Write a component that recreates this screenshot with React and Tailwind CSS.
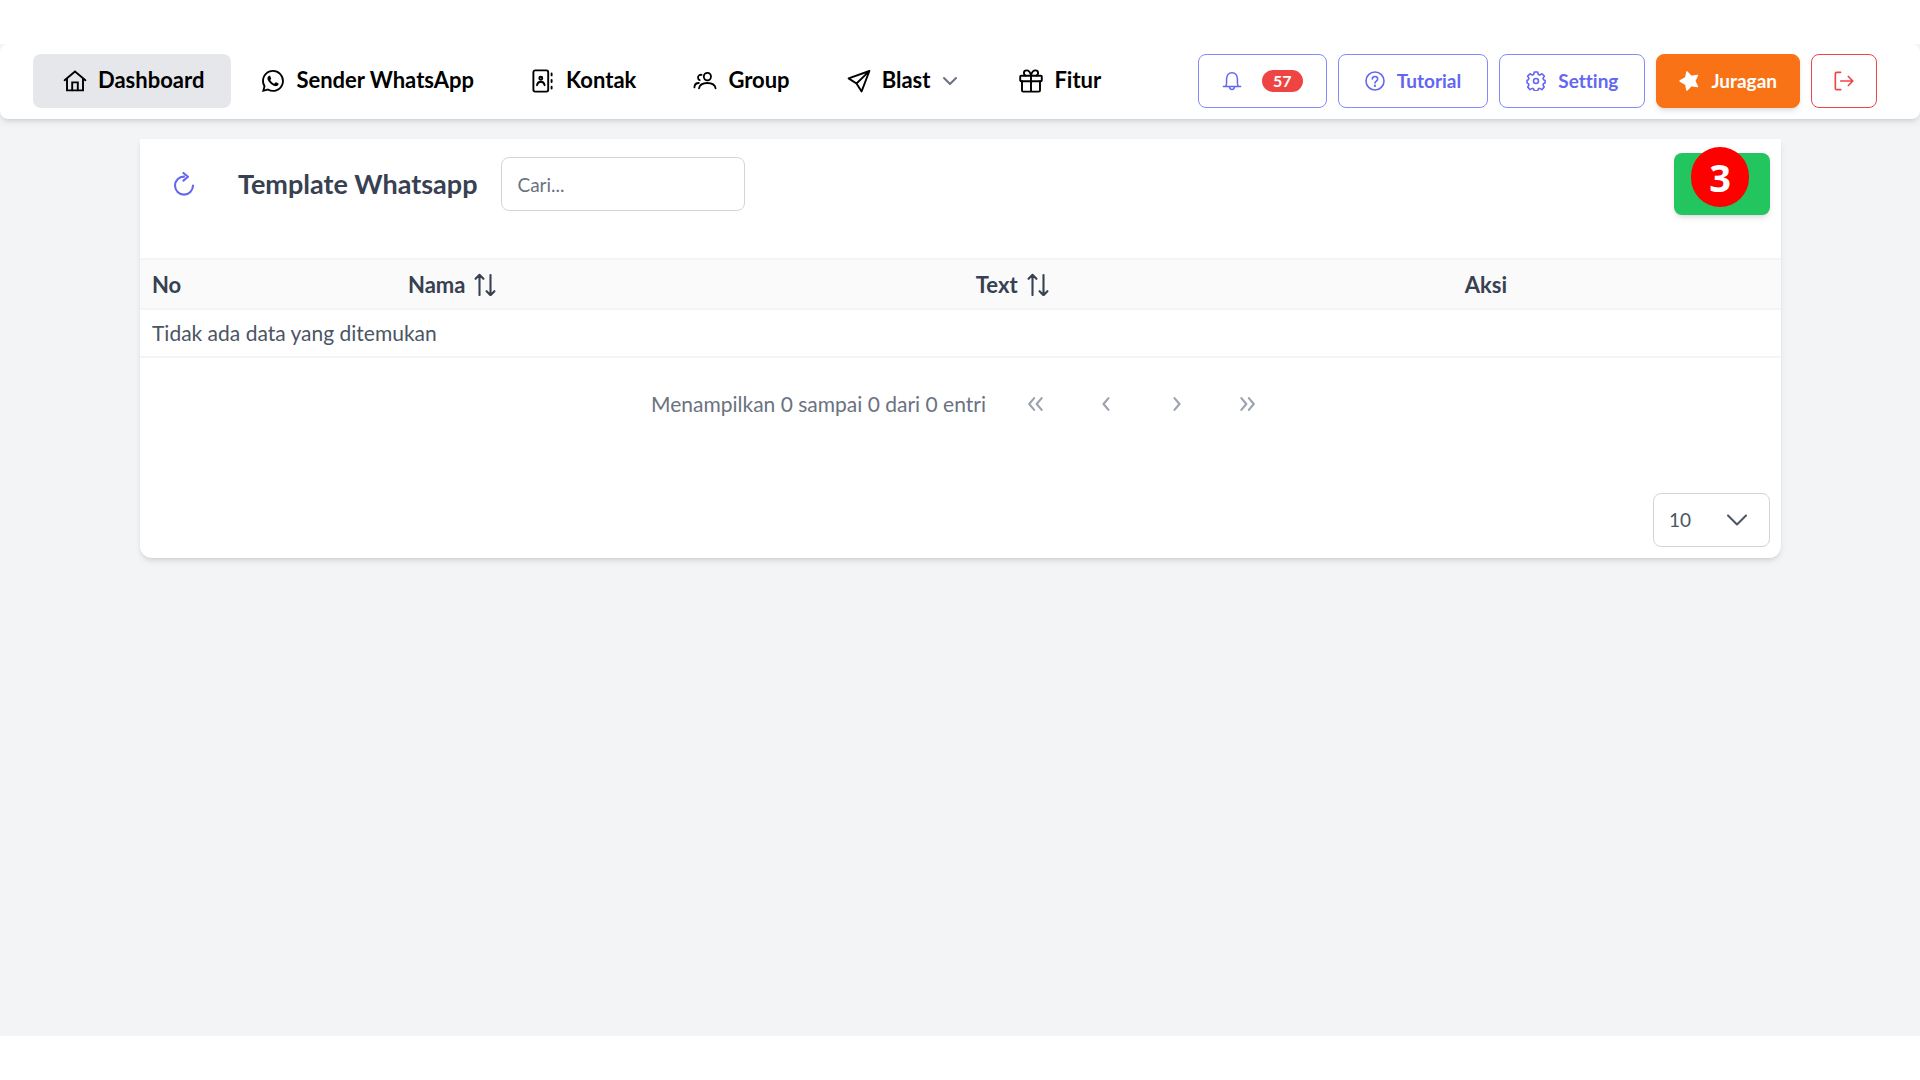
import { BsWhatsapp } from "react-icons/bs";

function Icon({ size = "size-6", stroke = 1.8, children }) {
  return (
    <svg
      viewBox="0 0 24 24"
      className={`${size} shrink-0`}
      fill="none"
      stroke="currentColor"
      strokeWidth={stroke}
      strokeLinecap="round"
      strokeLinejoin="round"
      aria-hidden="true"
    >
      {children}
    </svg>
  );
}

const HomeIcon = () => (
  <Icon stroke={1.9}>
    <path d="M1.6 11.2 12 2.6l10.4 8.6M4 9.6V21.4h16V9.6" strokeLinejoin="miter" />
    <path d="M9.2 21.2v-7.8h5.6v7.8" strokeLinejoin="miter" />
  </Icon>
);

const ContactIcon = () => (
  <Icon stroke={1.9}>
    <rect x="2.4" y="1.4" width="14.8" height="21.2" rx="1.8" />
    <circle cx="9.8" cy="9.2" r="1.5" />
    <path d="M6 16.2c.4-2.5 1.8-3.5 3.8-3.5s3.4 1 3.8 3.5M20.6 4.4v2M20.6 11v2M20.6 17.6v2" />
  </Icon>
);

const GroupIcon = () => (
  <Icon stroke={1.8}>
    <ellipse cx="14.4" cy="7.6" rx="3.6" ry="3.8" />
    <path d="M6 19.4c.6-3.8 3.7-5.4 8.4-5.4s7.6 1.6 8.2 5.4" />
    <path d="M8.6 5.8C6.6 5.6 5 6.6 5 8.6c0 1.2.6 2.1 1.7 2.5M1.4 18.4c.1-2.8 1.6-4.4 4.4-4.4" />
  </Icon>
);

const SendIcon = () => (
  <Icon stroke={1.9}>
    <path d="M22.4 2 1.6 9.4l7.9 5.1 5.1 7.9L22.4 2ZM22 2.4 9.5 14.5" />
  </Icon>
);

const GiftIcon = () => (
  <Icon stroke={1.9}>
    <rect x="1.2" y="6.8" width="21.6" height="5.4" rx="1" />
    <path d="M3 12.2v9.2c0 .7.5 1.2 1.2 1.2h15.6c.7 0 1.2-.5 1.2-1.2v-9.2M12 6.8v15.8" />
    <path d="M12 6.6C11.2 3 9.6 1.4 7.6 1.4c-1.6 0-2.7 1-2.7 2.5 0 1.2.7 2.2 1.6 2.7M12 6.6c.8-3.6 2.4-5.2 4.4-5.2 1.6 0 2.7 1 2.7 2.5 0 1.2-.7 2.2-1.6 2.7" />
  </Icon>
);

const ChevronDown = ({ size, stroke }) => (
  <Icon size={size} stroke={stroke}>
    <path d="m3 7.5 9 9 9-9" />
  </Icon>
);

const BellIcon = () => (
  <Icon size="size-5" stroke={1.8}>
    <path d="M1.6 18.6h20.8M4.4 18.4c1-1.2 1.1-3 1.1-5V9.6C5.5 5.2 8 2 12 2s6.5 3.2 6.5 7.6v3.8c0 2 .1 3.8 1.1 5M8.8 18.8c.3 2.2 1.5 3.4 3.2 3.4s2.9-1.2 3.2-3.4" />
  </Icon>
);

const HelpIcon = () => (
  <Icon size="size-5" stroke={1.9}>
    <circle cx="12" cy="12" r="10.8" />
    <path d="M8.8 9.6C8.9 7.7 10.2 6.6 12 6.6s3.2 1.1 3.2 2.9c0 2.7-3.2 2.6-3.2 5" />
    <circle cx="12" cy="17.6" r=".5" fill="currentColor" />
  </Icon>
);

const GearIcon = () => (
  <Icon size="size-5" stroke={1.9}>
    <path d="M9.9 1.2h4.2l.7 3 1.6.7 2.7-1.6 2.9 2.9-1.6 2.7.7 1.6 1.8.8v3l-1.8.8-.7 1.6 1.4 2.7-2.8 2.9-2.7-1.5-1.6.7-.7 2.3H9.9l-.7-2.3-1.6-.7-2.7 1.5-2.8-2.9 1.4-2.7-.7-1.6-1.6-.8v-3l1.6-.8.7-1.6L2 6.2l2.9-2.9 2.7 1.6 1.6-.7.7-3Z" />
    <circle cx="12" cy="12" r="3" />
  </Icon>
);

const StarIcon = () => (
  <Icon size="size-5" stroke={2}>
    <path
      fill="currentColor"
      d="M1.4 12l6.8-3.8 1.4-6.8 5 5.2 7.4-1.2-3.2 6.600 3.200 6.600-7.400-1.200-5 5.200-1.400-6.800Z"
    />
  </Icon>
);

const LogoutIcon = () => (
  <Icon size="size-5" stroke={2}>
    <path d="M8 1.6H3.4C2.3 1.6 1.6 2.3 1.6 3.4v17.2c0 1.1.7 1.8 1.8 1.8H8M8 12h14.5M17.2 6.6l5.4 5.4-5.4 5.4" />
  </Icon>
);

const RefreshIcon = () => (
  <Icon stroke={2.1}>
    <path d="M12 4.6a9 9 0 1 0 9 9M11.4 1l4.6 3.8-4.6 3.8" />
  </Icon>
);

const SortIcon = () => (
  <Icon stroke={2.1}>
    <path d="M6.5 23V3M2.6 6.8 6.5 2.8l3.9 4M17.5 3v20M13.6 19.2l3.9 4 3.9-4" />
  </Icon>
);

const navItems = [
  { label: "Dashboard", icon: <HomeIcon />, active: true },
  { label: "Sender WhatsApp", icon: <BsWhatsapp className="size-[22px]" aria-hidden="true" /> },
  { label: "Kontak", icon: <ContactIcon /> },
  { label: "Group", icon: <GroupIcon /> },
  { label: "Blast", icon: <SendIcon />, submenu: true },
  { label: "Fitur", icon: <GiftIcon /> },
];

const pagerButtons = [
  { label: "Halaman pertama", d: "m11 5-6 7 6 7M20 5l-6 7 6 7" },
  { label: "Halaman sebelumnya", d: "m15 5-6 7 6 7" },
  { label: "Halaman berikutnya", d: "m9 5 6 7-6 7" },
  { label: "Halaman terakhir", d: "m4 5 6 7-6 7M13 5l6 7-6 7" },
];

function ActionButton({ tone, label, children }) {
  return (
    <button
      type="button"
      aria-label={label}
      className={`flex h-[54px] items-center gap-3 rounded-lg border text-[19px] font-bold ${tone}`}
    >
      {children}
    </button>
  );
}

function Navbar() {
  return (
    <header className="relative flex items-center justify-between rounded-lg bg-white pt-[10px] pr-[43px] pb-[11px] pl-[33px] shadow-md">
      <nav>
        <ul className="flex">
          {navItems.map((item) => (
            <li key={item.label}>
              <a
                href="#"
                className={`flex h-[54px] items-center gap-2 rounded-lg px-[27px] text-[22px] font-bold text-black ${
                  item.active ? "bg-[#e5e7eb]" : ""
                }`}
              >
                <span className="flex w-[30px] justify-center">{item.icon}</span>
                <span className="pb-[3px]">{item.label}</span>
                {item.submenu && (
                  <span className="flex w-6 justify-center text-[#6b7280]">
                    <ChevronDown size="size-4" stroke={3} />
                  </span>
                )}
              </a>
            </li>
          ))}
        </ul>
      </nav>
      <div className="flex gap-[11px]">
        <ActionButton tone="px-[23px] border-[#818cf8] text-[#6366f1]" label="Notifikasi">
          <BellIcon />
          <span className="ml-2 flex h-[22px] w-[41px] items-center justify-center rounded-full bg-[#ef4444] text-base text-white">
            57
          </span>
        </ActionButton>
        <ActionButton tone="px-[26px] border-[#818cf8] text-[#6366f1]">
          <HelpIcon />
          <span>Tutorial</span>
        </ActionButton>
        <ActionButton tone="px-[26px] border-[#818cf8] text-[#6366f1]">
          <GearIcon />
          <span className="[font-variant-ligatures:none]">Setting</span>
        </ActionButton>
        <ActionButton tone="px-[22px] border-[#f97316] bg-[#f97316] text-white shadow-md">
          <StarIcon />
          <span>Juragan</span>
        </ActionButton>
        <ActionButton tone="px-[22px] border-[#ef4444] text-[#ef4444]" label="Keluar">
          <LogoutIcon />
        </ActionButton>
      </div>
    </header>
  );
}

function TemplateCard() {
  return (
    <section className="mr-[139px] ml-[140px] mt-5 rounded-b-xl bg-white pb-[11px] shadow-md">
      <div className="flex items-center justify-between px-[11px] pt-[14px] pb-[43px]">
        <div className="flex items-center">
          <button type="button" aria-label="Muat ulang" className="flex w-[66px] justify-center text-[#6366f1]">
            <RefreshIcon />
          </button>
          <h1 className="ml-[21px] text-[27px] font-bold text-[#374151]">Template Whatsapp</h1>
          <input
            type="text"
            aria-label="Cari"
            placeholder="Cari..."
            className="ml-6 h-[54px] w-[244px] rounded-lg border border-[#d1d5db] px-[15px] text-[19px] text-[#4b5563] placeholder:text-[#6b7280]"
          />
        </div>
        <button
          type="button"
          aria-label="Tambah template"
          className="relative h-[62px] w-24 rounded-lg bg-[#22c55e] shadow-md"
        >
          <span className="absolute -top-[6px] left-[17px] flex h-[60px] w-[58px] items-center justify-center rounded-full bg-[#ff0000] font-['Open_Sans'] text-[38px] leading-none font-bold text-white">
            3
          </span>
        </button>
      </div>

      <table className="w-full table-fixed text-left text-[21px]">
        <thead className="border-y-2 border-[#f3f4f6] bg-[#fafafa] text-[22px] text-[#374151]">
          <tr className="h-[50px]">
            <th className="w-[15.6%] px-3 font-bold">No</th>
            <th className="w-[34.6%] px-3 font-bold">
              <button type="button" className="flex items-center gap-2">
                Nama <SortIcon />
              </button>
            </th>
            <th className="w-[29.8%] px-3 font-bold">
              <button type="button" className="flex items-center gap-2">
                Text <SortIcon />
              </button>
            </th>
            <th className="px-3 font-bold">Aksi</th>
          </tr>
        </thead>
        <tbody>
          <tr className="h-12 border-b-2 border-[#f3f4f6] text-[#4b5563]">
            <td colSpan={4} className="px-3">
              Tidak ada data yang ditemukan
            </td>
          </tr>
        </tbody>
      </table>

      <div className="flex items-center justify-center gap-[27px] pt-6 text-[#6b7280]">
        <span className="text-[21px]">Menampilkan 0 sampai 0 dari 0 entri</span>
        {pagerButtons.map((button) => (
          <button
            key={button.label}
            type="button"
            aria-label={button.label}
            className="flex size-11 items-center justify-center text-[#9ca3af]"
          >
            <Icon size="size-5" stroke={2.6}>
              <path d={button.d} />
            </Icon>
          </button>
        ))}
      </div>

      <div className="mt-[67px] flex justify-end pr-[11px]">
        <div className="relative text-[#4b5563]">
          <select
            aria-label="Baris per halaman"
            className="h-[54px] w-[117px] appearance-none rounded-lg border border-[#d1d5db] bg-white px-[15px] text-[19px]"
          >
            <option>10</option>
            <option>25</option>
            <option>50</option>
          </select>
          <span className="pointer-events-none absolute inset-y-0 right-[21px] flex items-center">
            <ChevronDown size="size-6" stroke={2.1} />
          </span>
        </div>
      </div>
    </section>
  );
}

export default function App() {
  return (
    <div className="flex min-h-screen flex-col bg-white py-11 font-[Lato,sans-serif]">
      <main className="flex-1 bg-[#f3f4f6]">
        <Navbar />
        <TemplateCard />
      </main>
    </div>
  );
}
